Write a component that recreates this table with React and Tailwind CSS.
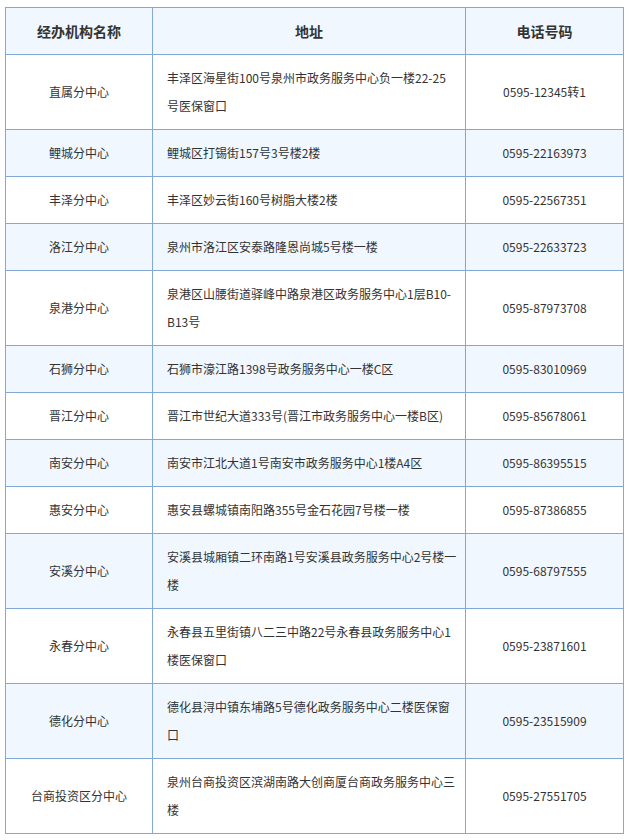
const rows = [
  { name: "直属分中心", addr: ["丰泽区海星街100号泉州市政务服务中心负一楼22-25", "号医保窗口"], phone: "0595-12345转1" },
  { name: "鲤城分中心", addr: ["鲤城区打锡街157号3号楼2楼"], phone: "0595-22163973" },
  { name: "丰泽分中心", addr: ["丰泽区妙云街160号树脂大楼2楼"], phone: "0595-22567351" },
  { name: "洛江分中心", addr: ["泉州市洛江区安泰路隆恩尚城5号楼一楼"], phone: "0595-22633723" },
  { name: "泉港分中心", addr: ["泉港区山腰街道驿峰中路泉港区政务服务中心1层B10-", "B13号"], phone: "0595-87973708" },
  { name: "石狮分中心", addr: ["石狮市濠江路1398号政务服务中心一楼C区"], phone: "0595-83010969" },
  { name: "晋江分中心", addr: ["晋江市世纪大道333号(晋江市政务服务中心一楼B区)"], phone: "0595-85678061" },
  { name: "南安分中心", addr: ["南安市江北大道1号南安市政务服务中心1楼A4区"], phone: "0595-86395515" },
  { name: "惠安分中心", addr: ["惠安县螺城镇南阳路355号金石花园7号楼一楼"], phone: "0595-87386855" },
  { name: "安溪分中心", addr: ["安溪县城厢镇二环南路1号安溪县政务服务中心2号楼一", "楼"], phone: "0595-68797555" },
  { name: "永春分中心", addr: ["永春县五里街镇八二三中路22号永春县政务服务中心1", "楼医保窗口"], phone: "0595-23871601" },
  { name: "德化分中心", addr: ["德化县浔中镇东埔路5号德化政务服务中心二楼医保窗", "口"], phone: "0595-23515909" },
  { name: "台商投资区分中心", addr: ["泉州台商投资区滨湖南路大创商厦台商政务服务中心三", "楼"], phone: "0595-27551705" },
];

const cell = "border border-[#82a9d3] py-[9px] leading-[28px]";

export default function App() {
  return (
    <div
      className="min-h-[840px] bg-white pl-[5px] pt-[7px] text-[#333333]"
      style={{ fontFamily: '"Noto Sans CJK SC", "Noto Sans", sans-serif' }}
    >
      <table className="w-[618px] table-fixed border-collapse">
        <colgroup>
          <col className="w-[147px]" />
          <col className="w-[313px]" />
          <col className="w-[158px]" />
        </colgroup>
        <thead>
          <tr className="bg-[#f0f7fe] text-[14px] font-bold">
            <th className={cell + " text-center"}>经办机构名称</th>
            <th className={cell + " text-center"}>地址</th>
            <th className={cell + " text-center"}>电话号码</th>
          </tr>
        </thead>
        <tbody className="text-[12px]">
          {rows.map((r, i) => (
            <tr key={r.name} className={i % 2 === 1 ? "bg-[#f0f7fe]" : "bg-white"}>
              <td className={cell + " text-center"}>{r.name}</td>
              <td className={cell + " px-[14px] text-left"}>
                {r.addr.map((line) => (
                  <div key={line} className="whitespace-nowrap">
                    {line}
                  </div>
                ))}
              </td>
              <td className={cell + " text-center"}>{r.phone}</td>
            </tr>
          ))}
        </tbody>
      </table>
    </div>
  );
}
